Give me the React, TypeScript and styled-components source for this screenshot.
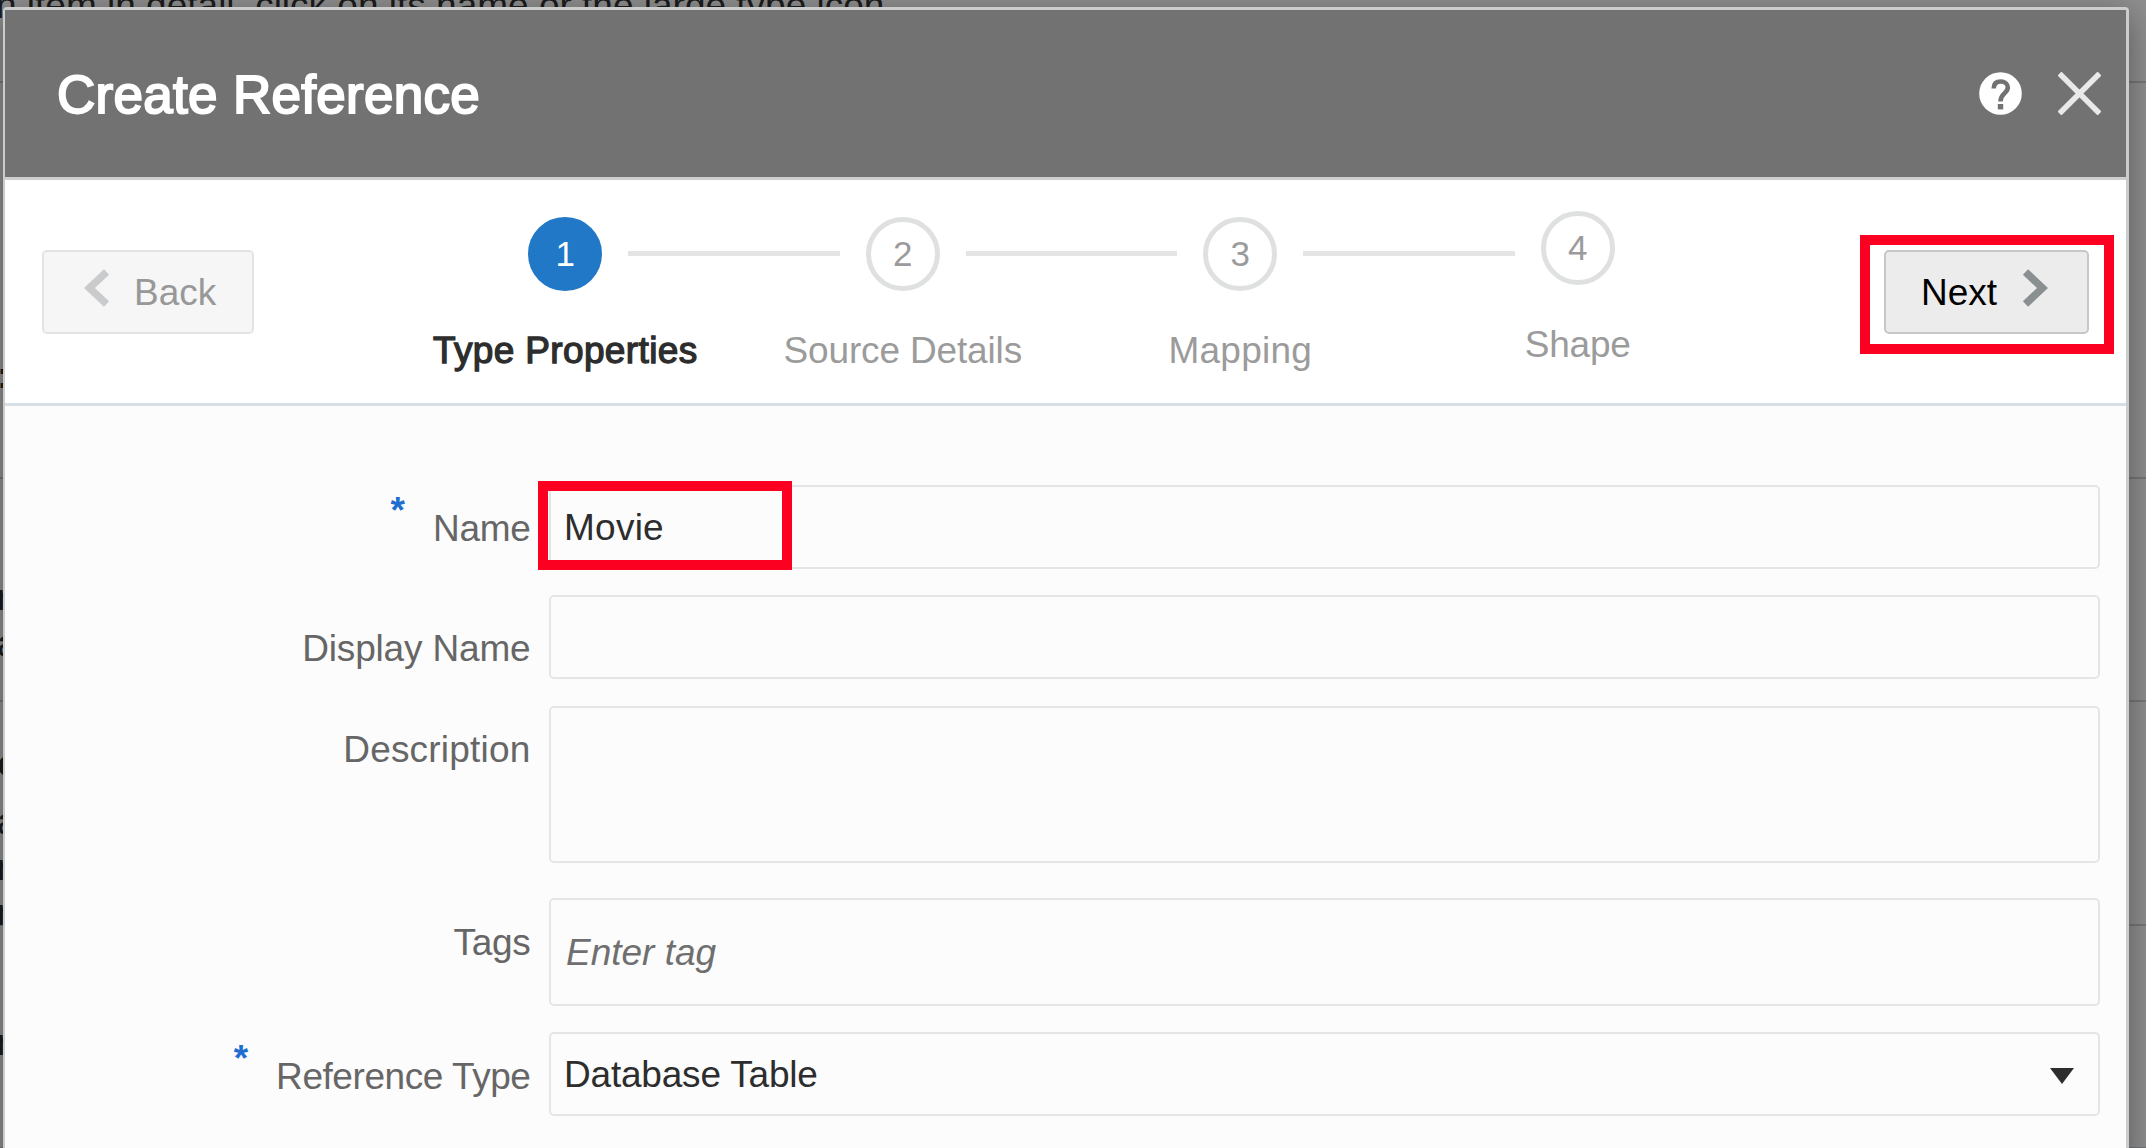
import React from "react";
import styled, { createGlobalStyle, css } from "styled-components";

const Global = createGlobalStyle`
  * { box-sizing: border-box; }
  body { margin: 0; background: #8b8b8b; overflow: hidden; font-family: "Liberation Sans", Arial, sans-serif; }
`;

const Page = styled.div`
  position: relative;
  width: 2146px;
  height: 1148px;
  padding: 7px 17px 0 3px;
  overflow: hidden;
  background: #8e8e8e;
`;

const Rule = styled.div<{ $y: number }>`
  position: absolute;
  left: 0;
  right: 0;
  top: ${(p) => p.$y}px;
  height: 2px;
  background: #747678;
`;

const Behind = styled.div<{ $x: number; $baseline: number; $bold?: boolean }>`
  position: absolute;
  left: ${(p) => p.$x}px;
  top: ${(p) => p.$baseline - 32}px;
  line-height: 40px;
  white-space: pre;
  color: #1c1c1c;
  font-size: 37px;
  font-weight: ${(p) => (p.$bold ? 700 : 400)};
`;

const Dialog = styled.section`
  position: relative;
  display: flex;
  flex-direction: column;
  height: 1160px;
  border: 3px solid #cbcccc;
  border-left-width: 2px;
  border-radius: 4px 4px 0 0;
  box-shadow: 0 8px 32px rgba(0, 0, 0, 0.38);
  background: #fcfcfc;
`;

const Header = styled.header`
  flex: none;
  display: flex;
  align-items: center;
  height: 170px;
  padding: 0 25px 0 52px;
  background: #727272;
  border-bottom: 3px solid #cfcfcf;
`;

const Title = styled.h1`
  margin: 2px 0 0;
  flex: 1;
  color: #fff;
  font-size: 53px;
  line-height: 60px;
  font-weight: 400;
  letter-spacing: 0.3px;
  -webkit-text-stroke: 2px #fff;
`;

const HeaderIcons = styled.div`
  display: flex;
  gap: 36px;
  svg { display: block; }
`;

const Train = styled.nav`
  flex: none;
  display: flex;
  justify-content: space-between;
  height: 226px;
  padding: 70px 37px 0;
  background: #fff;
  border-bottom: 3px solid #d5dfe5;
`;

const NavButton = styled.button<{ $muted?: boolean }>`
  flex: none;
  display: flex;
  align-items: center;
  width: ${(p) => (p.$muted ? 212 : 205)}px;
  height: 84px;
  padding: ${(p) => (p.$muted ? "1px 0 0 40px" : "1px 0 0 35px")};
  gap: ${(p) => (p.$muted ? 24 : 25)}px;
  border: 2.5px solid ${(p) => (p.$muted ? "#e2e4e4" : "#c5c7c8")};
  border-radius: 5px;
  background: ${(p) => (p.$muted ? "#f6f6f6" : "#ececec")};
  color: ${(p) => (p.$muted ? "#989898" : "#000")};
  font: 37px/42px "Liberation Sans", Arial, sans-serif;
  svg { margin-top: -9px; }
`;

const Highlighted = styled.div`
  position: relative;
  height: 84px;
`;

const Marker = styled.div<{ $x: number; $y: number; $w: number; $h: number }>`
  position: absolute;
  left: ${(p) => p.$x}px;
  top: ${(p) => p.$y}px;
  width: ${(p) => p.$w}px;
  height: ${(p) => p.$h}px;
  border: 10px solid #fb0020;
  pointer-events: none;
`;

const Steps = styled.ol`
  display: flex;
  margin: -33px 0 0 5px;
  padding: 0;
  list-style: none;
`;

const Step = styled.li<{ $current?: boolean; $raised?: boolean }>`
  display: flex;
  flex-direction: column;
  align-items: center;
  width: 74px;
  margin-top: ${(p) => (p.$raised ? -6 : 0)}px;
  white-space: nowrap;
  font-size: 37px;
  line-height: 42px;
  color: #9b9b9b;
  ${(p) => p.$current && css`color: #2d2d2d; -webkit-text-stroke: 1.3px #2d2d2d;`}
`;

const Bubble = styled.div<{ $current?: boolean }>`
  flex: none;
  display: flex;
  align-items: center;
  justify-content: center;
  width: 74px;
  height: 74px;
  margin-bottom: 39px;
  border-radius: 50%;
  border: 5px solid ${(p) => (p.$current ? "#2078c6" : "#dfe1e1")};
  background: ${(p) => (p.$current ? "#2078c6" : "#fff")};
  color: ${(p) => (p.$current ? "#fff" : "#9b9b9b")};
  font-size: 35px;
  -webkit-text-stroke: 0;
`;

const StepLabel = styled.span<{ $spacing?: number }>`
  letter-spacing: ${(p) => p.$spacing ?? 0}px;
`;

const Connector = styled.li`
  width: 211.5px;
  height: 5px;
  margin: 34px 26px 0;
  background: #e4e4e4;
`;

const Form = styled.form`
  display: flex;
  flex-direction: column;
  padding: 79px 26px 0 0;
`;

const Row = styled.div<{ $gap: number }>`
  position: relative;
  display: grid;
  grid-template-columns: 525.5px 1fr;
  column-gap: 18.5px;
  margin-bottom: ${(p) => p.$gap}px;
`;

const Label = styled.label<{ $top: number; $spacing?: number }>`
  display: flex;
  justify-content: flex-end;
  gap: 28px;
  padding-top: ${(p) => p.$top}px;
  font-size: 37px;
  line-height: 42px;
  color: #666;
  white-space: nowrap;
  letter-spacing: ${(p) => p.$spacing ?? 0}px;
`;

const Required = styled.span`
  margin-top: -18px;
  color: #1f6fd0;
  font-weight: 700;
  letter-spacing: 0;
`;

const Field = styled.div<{ $h: number; $spacing?: number }>`
  display: flex;
  align-items: center;
  justify-content: space-between;
  height: ${(p) => p.$h}px;
  padding: 1px 24px 0 13px;
  border: 2.5px solid #e4e6e6;
  border-radius: 5px;
  background: #fcfcfc;
  font-size: 37px;
  line-height: 42px;
  color: #2d2d2d;
  letter-spacing: ${(p) => p.$spacing ?? 0}px;
  svg { margin-top: 3px; }
`;

const Placeholder = styled.em`
  padding-left: 2px;
  color: #6f6f6f;
`;

const Chevron = ({ dir, color }: { dir: "left" | "right"; color: string }) => (
  <svg width="26" height="38" viewBox="0 0 26 38" fill="none" stroke={color} strokeWidth="7.5">
    <path d={dir === "left" ? "M22.5 3 5.5 19 22.5 35" : "M3.5 3 20.5 19 3.5 35"} />
  </svg>
);

const clipped = [
  { text: ":", baseline: 388, bold: true },
  { text: "n", baseline: 610 },
  { text: "a", baseline: 656 },
  { text: "o", baseline: 776, bold: true },
  { text: "a", baseline: 834 },
  { text: "n", baseline: 880 },
  { text: "n", baseline: 925 },
  { text: "n", baseline: 1055 },
];

export default function App() {
  return (
    <>
      <Global />
      <Page>
        {[81, 477, 700, 924, 1147].map((y) => <Rule key={y} $y={y} />)}
        <Behind $x={-4} $baseline={18}>n item in detail, click on its name or the large type icon.</Behind>
        {clipped.map((c) => (
          <Behind key={c.baseline} $x={-3} $baseline={c.baseline} $bold={c.bold}>{c.text}</Behind>
        ))}
        <Dialog>
          <Header>
            <Title>Create Reference</Title>
            <HeaderIcons>
              <svg width="43" height="43" viewBox="0 0 43 43" fill="none">
                <circle cx="21.5" cy="21.5" r="21.3" fill="#fff" />
                <path d="M14.700 16.500C14.700 11.500 17.700 9.500 21.700 9.500S28.800 12 28.800 15.500C28.800 21.500 21.500 21 21.500 29.500" stroke="#727272" strokeWidth="4.600" />
                <rect x="18.800" y="32" width="5.400" height="5.400" fill="#727272" />
              </svg>
              <svg width="43" height="43" viewBox="0 0 43 43" fill="none" stroke="#e9e9eb" strokeWidth="5.500">
                <path d="M1.500 1.500 41.500 41.500M41.500 1.500 1.500 41.500" />
              </svg>
            </HeaderIcons>
          </Header>
          <Train>
            <NavButton $muted><Chevron dir="left" color="#c9cbcc" />Back</NavButton>
            <Steps>
              <Step $current><Bubble $current>1</Bubble><StepLabel $spacing={0.36}>Type Properties</StepLabel></Step>
              <Connector />
              <Step><Bubble>2</Bubble><StepLabel $spacing={-0.15}>Source Details</StepLabel></Step>
              <Connector />
              <Step><Bubble>3</Bubble><StepLabel $spacing={0.25}>Mapping</StepLabel></Step>
              <Connector />
              <Step $raised><Bubble>4</Bubble><StepLabel $spacing={-0.2}>Shape</StepLabel></Step>
            </Steps>
            <Highlighted>
              <NavButton>Next<Chevron dir="right" color="#8a8f92" /></NavButton>
              <Marker $x={-24} $y={-15} $w={254} $h={119} />
            </Highlighted>
          </Train>
          <Form>
            <Row $gap={26}>
              <Label $top={23} $spacing={-0.3}><Required>*</Required>Name</Label>
              <Field $h={84} $spacing={0.25}>Movie</Field>
              <Marker $x={533} $y={-4} $w={254} $h={89} />
            </Row>
            <Row $gap={27}>
              <Label $top={33} $spacing={-0.17}>Display Name</Label>
              <Field $h={84} />
            </Row>
            <Row $gap={35}>
              <Label $top={23} $spacing={0.2}>Description</Label>
              <Field $h={157} />
            </Row>
            <Row $gap={26}>
              <Label $top={24} $spacing={-0.3}>Tags</Label>
              <Field $h={108}><Placeholder>Enter tag</Placeholder></Field>
            </Row>
            <Row $gap={0}>
              <Label $top={24} $spacing={-0.44}><Required>*</Required>Reference Type</Label>
              <Field $h={84} $spacing={-0.2}>
                Database Table
                <svg width="24" height="16" viewBox="0 0 24 16"><path d="M0 0H24L12 16Z" fill="#2d2d2d" /></svg>
              </Field>
            </Row>
          </Form>
        </Dialog>
      </Page>
    </>
  );
}
